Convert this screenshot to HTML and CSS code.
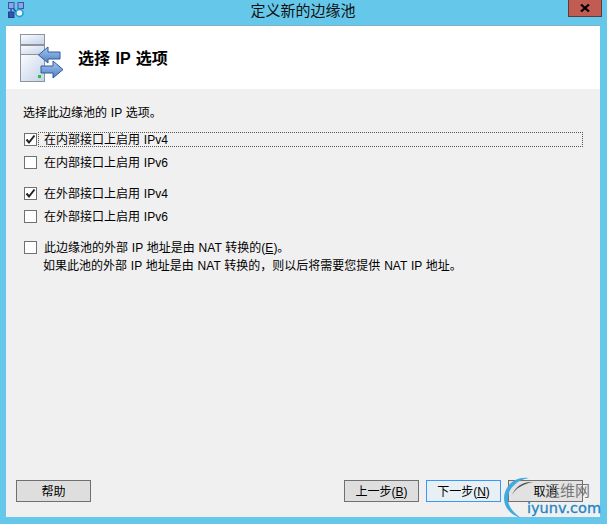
FILE: index.html
```html
<!DOCTYPE html>
<html lang="zh">
<head>
<meta charset="utf-8">
<title>定义新的边缘池</title>
<link rel="stylesheet" href="styles.css">
</head>
<body>
<div class="window">
  <div class="titlebar">
    <svg class="app-icon" width="16" height="16" viewBox="0 0 16 16">
      <path d="M3 5 V12 M13 5 V9 M4 5 L10 12" stroke="#2f4f9f" stroke-width="1.5" fill="none"/>
      <rect x="0.5" y="0.5" width="5.5" height="6" fill="#8aa6e4" stroke="#3a55a5"/>
      <rect x="10" y="0.5" width="5.5" height="6" fill="#8aa6e4" stroke="#3a55a5"/>
      <rect x="0.5" y="10" width="5.5" height="5.5" fill="#2f55b0" stroke="#24408c"/>
      <circle cx="11.5" cy="11" r="3.6" fill="#e8f6fc" stroke="#1f9fd8" stroke-width="1.6"/>
    </svg>
    <div class="title">定义新的边缘池</div>
    <div class="close"><svg width="10" height="8" viewBox="0 0 10 8"><path d="M1 0.5 L9 7.5 M9 0.5 L1 7.5" stroke="#000" stroke-width="2.2"/></svg></div>
  </div>
  <div class="client">
    <div class="header">
      <svg class="header-icon" width="46" height="50" viewBox="0 0 46 50">
        <defs>
          <linearGradient id="srv" x1="0" y1="0" x2="1" y2="1"><stop offset="0" stop-color="#fafbfd"/><stop offset="1" stop-color="#c4d2ea"/></linearGradient>
          <linearGradient id="arw" x1="0" y1="0" x2="0" y2="1"><stop offset="0" stop-color="#a9c8ee"/><stop offset="1" stop-color="#4f7fc4"/></linearGradient>
        </defs>
        <rect x="0" y="0" width="25" height="48" fill="#8d949c"/>
        <rect x="1" y="1" width="23" height="9" fill="url(#srv)"/>
        <rect x="1" y="12" width="23" height="8" fill="url(#srv)"/>
        <rect x="1" y="21" width="23" height="26" fill="url(#srv)"/>
        <rect x="18" y="41" width="3" height="3" fill="#22c52e"/>
        <path d="M18.5 21 L28 13 V18 H40 V25 H28 V29 Z" fill="url(#arw)" stroke="#2f5a9e"/>
        <path d="M43 35.5 L33 27 V32 H21 V39 H33 V44 Z" fill="url(#arw)" stroke="#2f5a9e"/>
      </svg>
      <h1 class="heading">选择 IP 选项</h1>
    </div>
    <div class="body">
      <p class="intro">选择此边缘池的 IP 选项。</p>
      <div class="group">
        <label class="opt"><span class="box"><svg class="tick" width="11" height="11" viewBox="0 0 11 11"><path d="M1.5 5.5 L4 8.5 L9.5 1.5" stroke="#222" stroke-width="2" fill="none"/></svg></span><span class="text focus">在内部接口上启用 IPv4</span></label>
        <label class="opt"><span class="box"></span><span class="text">在内部接口上启用 IPv6</span></label>
      </div>
      <div class="group">
        <label class="opt"><span class="box"><svg class="tick" width="11" height="11" viewBox="0 0 11 11"><path d="M1.5 5.5 L4 8.5 L9.5 1.5" stroke="#222" stroke-width="2" fill="none"/></svg></span><span class="text">在外部接口上启用 IPv4</span></label>
        <label class="opt"><span class="box"></span><span class="text">在外部接口上启用 IPv6</span></label>
      </div>
      <div class="group">
        <label class="opt"><span class="box"></span><span class="text">此边缘池的外部 IP 地址是由 NAT 转换的(<u>E</u>)。</span></label>
        <p class="note">如果此池的外部 IP 地址是由 NAT 转换的，则以后将需要您提供 NAT IP 地址。</p>
      </div>
    </div>
    <div class="footer">
      <button class="btn">帮助</button>
      <div class="nav">
        <button class="btn">上一步(<u>B</u>)</button>
        <button class="btn primary">下一步(<u>N</u>)</button>
        <button class="btn cancel">取消</button>
      </div>
    </div>
  </div>
  <div class="watermark">
    <svg class="wm-arc" width="46" height="46" viewBox="0 0 46 46">
      <path d="M26 2 C12 0 1 10 1 22 C1 32 8 39 18 42 C11 37 5 31 5 23 C5 12 14 4 26 2 Z" fill="#3fa9e0"/>
      <path d="M30 6 C20 5 12 11 9 19 C13 12 20 8 30 6 Z" fill="#555"/>
    </svg>
    <span class="wm-cn">运维网</span>
    <span class="wm-en">iyunv.com</span>
  </div>
</div>
</body>
</html>
```
FILE: styles.css
```css
* { box-sizing: border-box; }
html, body { margin: 0; padding: 0; }
body { width: 607px; height: 524px; overflow: hidden; font-family: "Liberation Sans", "Noto Sans CJK SC", sans-serif; font-size: 12px; word-spacing: 0.5px; color: #000; }
.window { position: relative; width: 607px; height: 524px; background: #65c8ea; padding: 0 7px 7px 6px; display: flex; flex-direction: column; }
.titlebar { height: 26px; flex: none; display: flex; align-items: flex-start; justify-content: center; border-bottom: 1px solid #7fb4cc; position: relative; }
.app-icon { position: absolute; left: 2px; top: 2px; }
.title { font-size: 15px; line-height: 22px; color: #111; }
.close { position: absolute; right: -2px; top: 0; width: 34px; height: 17px; background: #c25c52; border: 1px solid #5c3a3a; border-top: 0; display: flex; align-items: center; justify-content: center; }
.client { flex: 1; display: flex; flex-direction: column; background: #f0f0f0; }
.header { height: 63px; flex: none; background: #fff; display: flex; align-items: flex-start; padding: 8px 0 0 14px; }
.header-icon { flex: none; }
.heading { margin: 14px 0 0 12px; font-size: 16px; font-weight: 700; line-height: 22px; word-spacing: 1px; }
.body { flex: 1; padding: 16px 17px 0; }
.intro { margin: 0 0 9px; line-height: 17px; }
.group { margin-bottom: 15px; }
.opt { display: flex; align-items: center; height: 16px; margin-bottom: 7px; }
.box { flex: none; width: 13px; height: 13px; margin-left: 1px; border: 1px solid #707070; background: #fff; display: block; }
.tick { display: block; }
.text { flex: none; margin-left: 7px; padding-top: 2px; line-height: 15px; }
.focus { flex: 1; height: 15px; padding: 0 0 0 5px; border: 1px dotted #555; line-height: 15px; margin-left: 1px; }
.note { margin: -4px 0 0 20px; line-height: 17px; }
.footer { flex: none; height: 37px; display: flex; justify-content: space-between; padding: 0 17px 0 10px; }
.nav { display: flex; gap: 7px; }
.btn { width: 75px; height: 22px; padding: 0 0 1px; background: #dedede; border: 1px solid #707070; font: inherit; color: #000; }
.btn.primary { background: #e8f0f6; border-color: #3399ff; }
.btn.cancel { background: #e2e2e2; }
.watermark { position: absolute; left: 503px; top: 476px; width: 102px; height: 44px; }
.wm-arc { position: absolute; left: 0; top: 0; }
.wm-cn { position: absolute; left: 42px; top: 6px; font-size: 15px; line-height: 18px; color: #777; }
.wm-en { position: absolute; left: 24px; top: 23px; font-family: "DejaVu Sans", sans-serif; font-size: 14.5px; line-height: 18px; color: #1f86c6; -webkit-text-stroke: 0.3px #1f86c6; white-space: nowrap; }
```
